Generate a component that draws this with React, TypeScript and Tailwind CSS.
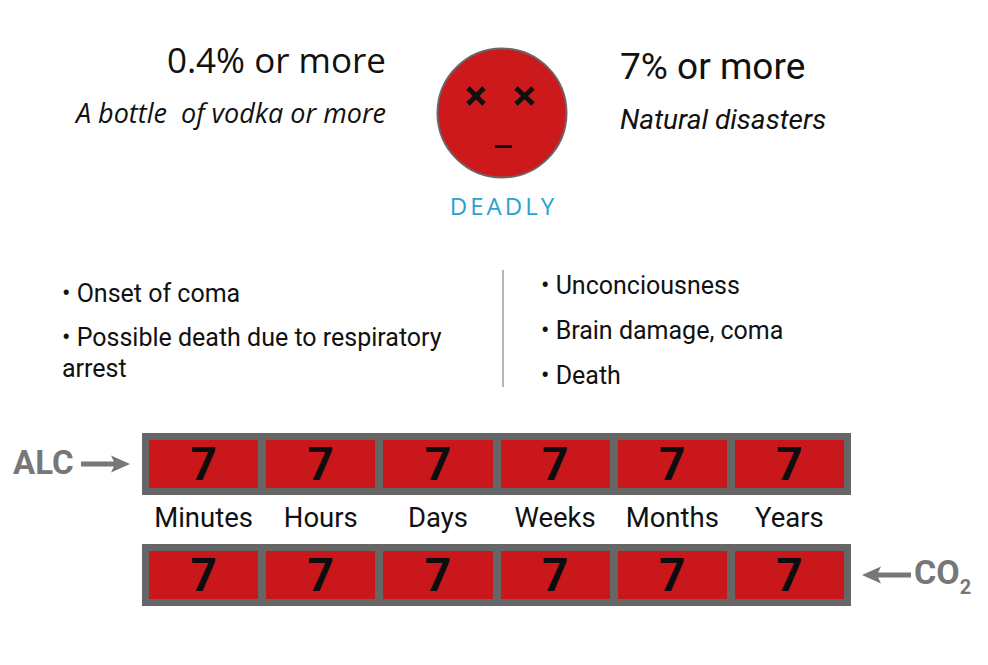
import React from "react";

const units = ["Minutes", "Hours", "Days", "Weeks", "Months", "Years"];

function Bar() {
  return (
    <div className="flex h-[62px] w-[709px] gap-[8px] bg-[#666666] p-[7px]">
      {units.map((u) => (
        <div
          key={u}
          className="flex flex-1 items-center justify-center bg-[#c9171b] font-['Roboto'] text-[46px] font-bold leading-none text-[#0d0d0d]"
        >
          7
        </div>
      ))}
    </div>
  );
}

function Arrow({ left = false }: { left?: boolean }) {
  return (
    <svg width="49" height="20" viewBox="0 0 49 20" className={left ? "-scale-x-100" : ""}>
      <rect x="0" y="7.5" width="36" height="5" fill="#777777" />
      <polygon points="49,10 30,1.5 34,10 30,18.5" fill="#777777" />
    </svg>
  );
}

function Smiley() {
  return (
    <svg width="132" height="132" viewBox="0 0 132 132">
      <circle cx="66" cy="66" r="64.5" fill="#cc1a1c" stroke="#6e6464" strokeWidth="2" />
      <g stroke="#111111" strokeWidth="5">
        <line x1="32" y1="41" x2="48" y2="57" />
        <line x1="48" y1="41" x2="32" y2="57" />
        <line x1="80" y1="41" x2="97" y2="57" />
        <line x1="97" y1="41" x2="80" y2="57" />
        <line x1="59" y1="99.5" x2="76" y2="99.5" strokeWidth="3" />
      </g>
    </svg>
  );
}

export default function App() {
  return (
    <div className="h-[665px] w-[988px] overflow-hidden bg-white font-['Roboto'] text-[#111111]">
      {/* top section */}
      <div className="flex h-[270px] items-start">
        <div className="flex w-[386px] flex-col items-end text-right">
          <div className="mt-[42px] font-['Open_Sans'] text-[35px] leading-none">0.4% or more</div>
          <div className="mt-[22px] whitespace-pre font-['Open_Sans'] text-[27px] italic leading-none">
            A bottle  of vodka or more
          </div>
        </div>
        <div className="ml-[50px] mt-[47px] flex w-[132px] flex-col items-center">
          <Smiley />
          <div className="mt-[15px] pl-[3px] font-['Open_Sans'] text-[24px] leading-none tracking-[3px] text-[#2aa2d3]">
            DEADLY
          </div>
        </div>
        <div className="ml-[52px] flex flex-col">
          <div className="mt-[48px] text-[37px] leading-none">7% or more</div>
          <div className="mt-[21px] text-[28px] italic leading-none">Natural disasters</div>
        </div>
      </div>

      {/* bullets section */}
      <div className="flex h-[163px] items-start">
        <div className="w-[502px] pl-[62px]">
          <div className="w-[400px] text-[25px] leading-[31px]">
            <p className="mt-[8px]">• Onset of coma</p>
            <p className="mt-[13px]">• Possible death due to respiratory arrest</p>
          </div>
        </div>
        <div className="h-[117px] w-[2px] bg-[#b5b5b5]" />
        <div className="ml-[37px] text-[25px] leading-[31px]">
          <p>• Unconciousness</p>
          <p className="mt-[14px]">• Brain damage, coma</p>
          <p className="mt-[14px]">• Death</p>
        </div>
      </div>

      {/* timer section */}
      <div className="grid grid-cols-[142px_709px_1fr] grid-rows-[62px_49px_61px]">
        <div className="flex items-center pl-[13px]">
          <span className="mt-[-3px] text-[33px] font-bold leading-none text-[#777777]">ALC</span>
          <span className="ml-[7px] flex">
            <Arrow />
          </span>
        </div>
        <Bar />
        <div />

        <div />
        <div className="flex items-center gap-[8px] px-[7px]">
          {units.map((u) => (
            <div key={u} className="mt-[-3px] flex-1 text-center text-[27.5px] leading-none">
              {u}
            </div>
          ))}
        </div>
        <div />

        <div />
        <div className="h-[61px]">
          <Bar />
        </div>
        <div className="flex items-center pl-[11px]">
          <span className="flex">
            <Arrow left />
          </span>
          <span className="ml-[3px] mt-[2px] text-[34px] font-bold leading-none text-[#777777]">
            CO<span className="align-[-10px] text-[20px]">2</span>
          </span>
        </div>
      </div>
    </div>
  );
}
